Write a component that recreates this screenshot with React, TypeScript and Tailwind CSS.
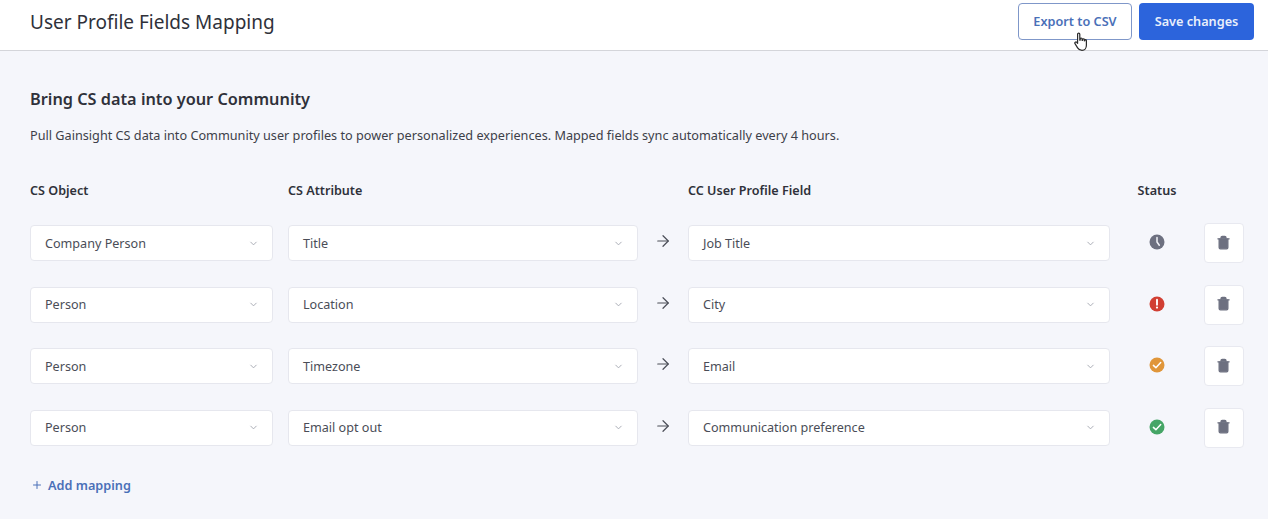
import { ArrowRight, ChevronDown, Plus, Trash2 } from "lucide-react";

type Status = "pending" | "error" | "warning" | "success";

const rows: { object: string; attribute: string; field: string; status: Status }[] = [
  { object: "Company Person", attribute: "Title", field: "Job Title", status: "pending" },
  { object: "Person", attribute: "Location", field: "City", status: "error" },
  { object: "Person", attribute: "Timezone", field: "Email", status: "warning" },
  { object: "Person", attribute: "Email opt out", field: "Communication preference", status: "success" },
];

function Select({ value }: { value: string }) {
  return (
    <div className="flex h-[36px] items-center justify-between rounded-[4px] border border-[#e6e7ee] bg-white pl-[14px] pr-[13px] text-[12.6px] text-[#4a4d57]">
      <span className="translate-y-[1px]">{value}</span>
      <ChevronDown className="h-[11px] w-[11px] text-[#a3a6b0]" strokeWidth={2} />
    </div>
  );
}

function StatusIcon({ status }: { status: Status }) {
  if (status === "pending") {
    return (
      <svg viewBox="0 0 16 16" className="h-[16px] w-[16px]">
        <circle cx="8" cy="8" r="7.5" fill="#6d7080" />
        <path d="M8 3.6V8l2.3 3.2" fill="none" stroke="#f1f2f7" strokeWidth="1.5" strokeLinecap="round" />
      </svg>
    );
  }
  if (status === "error") {
    return (
      <svg viewBox="0 0 16 16" className="h-[16px] w-[16px]">
        <circle cx="8" cy="8" r="7.5" fill="#d13f33" />
        <path d="M8 3.8v5" fill="none" stroke="#ffffff" strokeWidth="1.9" strokeLinecap="round" />
        <circle cx="8" cy="11.6" r="1.1" fill="#ffffff" />
      </svg>
    );
  }
  return (
    <svg viewBox="0 0 16 16" className="h-[16px] w-[16px]">
      <circle cx="8" cy="8" r="7.5" fill={status === "warning" ? "#e0963a" : "#45a566"} />
      <path d="M4.4 8.4l2.5 2.4 4.8-5.2" fill="none" stroke="#ffffff" strokeWidth="1.5" strokeLinecap="round" strokeLinejoin="round" />
    </svg>
  );
}

function Cursor() {
  return (
    <svg viewBox="0 0 16 20" className="absolute left-[1074px] top-[32px] h-[20px] w-[16px]">
      <path
        d="M3.6 2.2c0-1.4 2.2-1.4 2.2 0v6l.4-.1V6.9c0-1.2 1.9-1.2 1.9 0v1.4l.4.1V7.6c0-1.1 1.8-1.1 1.8 0v1.1l.4.1v-.4c0-1 1.7-1 1.7.2v4.6c0 2.7-1.6 5.1-4.4 5.1-2.2 0-3.4-.7-4.4-2.4L1 11.6c-.7-1.2.9-2.3 1.8-1.2l.8 1V2.2z"
        fill="#ffffff"
        stroke="#2b2b2b"
        strokeWidth="1.2"
        strokeLinejoin="round"
      />
    </svg>
  );
}

export default function App() {
  return (
    <div className="relative min-h-[519px] bg-[#f5f6fb] font-['Noto_Sans',sans-serif] text-[#2f313a]">
      <header className="flex h-[51px] items-start justify-between border-b border-[#d4d5da] bg-white pl-[30px] pr-[14px] pt-[3px]">
        <h1 className="mt-[3px] text-[19px] leading-[32px] text-[#2f313a]">User Profile Fields Mapping</h1>
        <div className="flex gap-[7px]">
          <button className="h-[37px] w-[114px] rounded-[4px] border-[1.5px] border-[#7f97c9] bg-white text-[12.7px] font-semibold text-[#4a70b8]">
            Export to CSV
          </button>
          <button className="h-[37px] w-[115px] rounded-[4px] bg-[#2c64dc] text-[12.7px] font-semibold text-[#e9effb]">
            Save changes
          </button>
        </div>
      </header>
      <Cursor />

      <main className="pl-[30px] pr-[24px] pt-[37px]">
        <h2 className="text-[16.3px] font-semibold leading-[22px] text-[#2f313a]">Bring CS data into your Community</h2>
        <p className="mt-[15px] text-[12.68px] leading-[20px] text-[#3d3f49]">
          Pull Gainsight CS data into Community user profiles to power personalized experiences. Mapped fields sync automatically every 4 hours.
        </p>

        <div className="mt-[36px] grid grid-cols-[243px_15px_350px_50px_422px_94px_40px] items-center">
          <div className="pb-[22px] text-[12.6px] font-semibold leading-[20px]">CS Object</div>
          <div />
          <div className="pb-[22px] text-[12.6px] font-semibold leading-[20px]">CS Attribute</div>
          <div />
          <div className="pb-[22px] text-[12.6px] font-semibold leading-[20px]">CC User Profile Field</div>
          <div className="pb-[22px] text-center text-[12.6px] font-semibold leading-[20px]">Status</div>
          <div />
        </div>

        <div className="flex flex-col gap-[21.5px]">
          {rows.map((row) => (
            <div key={row.attribute} className="grid h-[40px] grid-cols-[243px_15px_350px_50px_422px_94px_40px] items-center">
              <Select value={row.object} />
              <div />
              <Select value={row.attribute} />
              <div className="flex justify-center">
                <ArrowRight className="h-[18px] w-[18px] -translate-y-[2px] text-[#4a4d57]" strokeWidth={1.6} />
              </div>
              <Select value={row.field} />
              <div className="flex -translate-y-[1px] justify-center">
                <StatusIcon status={row.status} />
              </div>
              <button className="flex h-[40px] w-[40px] items-center justify-center rounded-[4px] border border-[#e8e9f0] bg-white">
                <Trash2 className="h-[15px] w-[15px] -translate-x-[1px] -translate-y-[1px] fill-[#6d7080] text-[#6d7080]" strokeWidth={2} />
              </button>
            </div>
          ))}
        </div>

        <button className="ml-[1px] mt-[27px] flex items-center gap-[5px] text-[12.7px] font-semibold leading-[20px] text-[#4a70b8]">
          <Plus className="h-[12px] w-[12px]" strokeWidth={2} />
          Add mapping
        </button>
      </main>
    </div>
  );
}
